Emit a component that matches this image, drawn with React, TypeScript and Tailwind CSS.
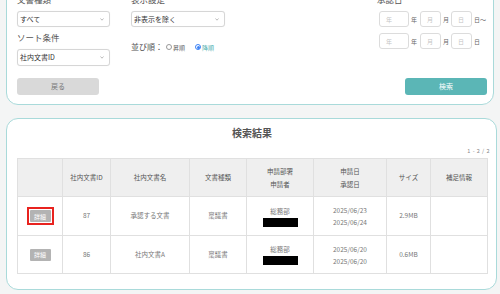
import React from "react";

const font = { fontFamily: '"Noto Sans CJK JP", "Noto Sans", sans-serif' };

const Chevron = () => (
  <svg width="4" height="3" viewBox="0 0 4 3" className="mr-[5px]">
    <path d="M0.5 0.5 L2 2.2 L3.5 0.5" fill="none" stroke="#aaa" strokeWidth="0.8" />
  </svg>
);

const Select = ({ value, h = "h-[16px]" }: { value: string; h?: string }) => (
  <div
    className={`${h} w-full flex items-center justify-between rounded-[3px] border border-[#d6d6d6] bg-white pl-[2px] text-[7px] text-[#333] shadow-[0_0_1px_rgba(0,0,0,0.08)]`}
  >
    <span>{value}</span>
    <Chevron />
  </div>
);

const Label = ({ children }: { children: React.ReactNode }) => (
  <div className="h-[12px] leading-[12px] text-[8.5px] text-[#555]">{children}</div>
);

const DateBox = ({ ph, w }: { ph: string; w: string }) => (
  <div
    className={`${w} h-[16px] flex items-center rounded-[3px] border border-[#dcdcdc] bg-white pl-[6px] text-[6px] text-[#c4c4c4]`}
  >
    {ph}
  </div>
);

const DateRow = ({ last }: { last: string }) => (
  <div className="flex items-center text-[6px] text-[#666]">
    <DateBox ph="年" w="w-[30px]" />
    <span className="w-[11px] pl-[2px]">年</span>
    <DateBox ph="月" w="w-[21px]" />
    <span className="w-[10px] pl-[2px]">月</span>
    <DateBox ph="日" w="w-[21px]" />
    <span className="pl-[2px]">{last}</span>
  </div>
);

const DetailBtn = ({ active }: { active?: boolean }) => (
  <div
    className={`mx-auto flex w-fit items-center justify-center ${
      active ? "border-2 border-[#e8231f] p-[1px]" : "border-2 border-transparent p-[1px]"
    }`}
  >
    <div className="flex h-[12px] w-[21px] items-center justify-center rounded-[1px] bg-[#b3b3b3] text-[6px] text-white">
      詳細
    </div>
  </div>
);

const rows = [
  { id: "87", name: "承認する文書", type: "稟議書", dept: "総務部", d1: "2025/06/23", d2: "2025/06/24", size: "2.9MB", active: true, h: "h-[39px]" },
  { id: "86", name: "社内文書A", type: "稟議書", dept: "総務部", d1: "2025/06/20", d2: "2025/06/20", size: "0.6MB", active: false, h: "h-[38px]" },
];

export default function App() {
  return (
    <div className="h-[294px] w-[500px] overflow-hidden bg-[#f4f5f5]" style={font}>
      {/* search form */}
      <div className="-mt-[20px] ml-[6px] mr-[6px] rounded-b-[12px] border border-[#a9dada] bg-white pb-[9px] pl-[10px] pr-[6px] pt-[12px]">
        <div className="flex">
          <div className="w-[93px]">
            <Label>文書種類</Label>
            <div className="mt-[6px]">
              <Select value="すべて" />
            </div>
            <div className="mt-[4px]">
              <Label>ソート条件</Label>
            </div>
            <div className="mt-[6px]">
              <Select value="社内文書ID" h="h-[17px]" />
            </div>
          </div>
          <div className="ml-[21px] w-[94px]">
            <Label>表示設定</Label>
            <div className="mt-[6px]">
              <Select value="非表示を除く" />
            </div>
            <div className="mt-[14px] flex h-[12px] items-center">
              <span className="text-[8px] text-[#555]">並び順：</span>
              <span className="ml-[3px] h-[6px] w-[6px] rounded-full border border-[#999] bg-white" />
              <span className="ml-[1px] text-[6px] text-[#666]">昇順</span>
              <span className="ml-[10px] flex h-[6px] w-[6px] items-center justify-center rounded-full border border-[#3b82f6] bg-white">
                <span className="h-[3px] w-[3px] rounded-full bg-[#3b82f6]" />
              </span>
              <span className="ml-[1px] text-[6px] text-[#4fb0b0]">降順</span>
            </div>
          </div>
          <div className="ml-[152px]">
            <Label>承認日</Label>
            <div className="mt-[6px] pl-[2px]">
              <DateRow last="日〜" />
            </div>
            <div className="mt-[6px] pl-[2px]">
              <DateRow last="日" />
            </div>
          </div>
        </div>
        <div className="mt-[12px] flex justify-between">
          <button className="flex h-[17px] w-[82px] items-center justify-center rounded-[3px] bg-[#d9d9d9] text-[7px] text-[#777]">
            戻る
          </button>
          <button className="flex h-[17px] w-[82px] items-center justify-center rounded-[3px] bg-[#5bb6b6] text-[7px] text-white">
            検索
          </button>
        </div>
      </div>

      {/* results */}
      <div className="ml-[6px] mr-[3px] mt-[13px] rounded-[12px] border border-[#a9dada] bg-white pb-[15px] pl-[10px] pr-[9px] pt-[7px]">
        <div className="h-[14px] text-center text-[10px] font-bold leading-[14px] text-[#555]">検索結果</div>
        <div className="-mr-[3px] mt-[7px] h-[8px] text-right text-[5.5px] leading-[8px] tracking-[0.5px] text-[#888]">
          1 - 2 / 2
        </div>
        <table className="mt-[3px] w-[470px] table-fixed border-collapse text-[6.5px]">
          <colgroup>
            <col className="w-[45px]" />
            <col className="w-[48px]" />
            <col className="w-[79px]" />
            <col className="w-[57px]" />
            <col className="w-[67px]" />
            <col className="w-[73px]" />
            <col className="w-[44px]" />
            <col className="w-[57px]" />
          </colgroup>
          <thead>
            <tr className="h-[38px] bg-[#efefef] text-[#555]">
              <th className="border border-[#e0e0e0] font-normal"></th>
              <th className="border border-[#e0e0e0] font-normal">社内文書ID</th>
              <th className="border border-[#e0e0e0] font-normal">社内文書名</th>
              <th className="border border-[#e0e0e0] font-normal">文書種類</th>
              <th className="border border-[#e0e0e0] font-normal leading-[13px]">
                申請部署
                <br />
                申請者
              </th>
              <th className="border border-[#e0e0e0] font-normal leading-[13px]">
                申請日
                <br />
                承認日
              </th>
              <th className="border border-[#e0e0e0] font-normal">サイズ</th>
              <th className="border border-[#e0e0e0] font-normal">補足情報</th>
            </tr>
          </thead>
          <tbody className="text-[#777]">
            {rows.map((r) => (
              <tr key={r.id} className={r.h}>
                <td className="border border-[#e0e0e0]">
                  <DetailBtn active={r.active} />
                </td>
                <td className="border border-[#e0e0e0] text-center">{r.id}</td>
                <td className="border border-[#e0e0e0] text-center">{r.name}</td>
                <td className="border border-[#e0e0e0] text-center">{r.type}</td>
                <td className="border border-[#e0e0e0] text-center">
                  <div className="leading-[10px]">{r.dept}</div>
                  <div className="mx-auto mt-[2px] h-[9px] w-[35px] bg-black" />
                </td>
                <td className="border border-[#e0e0e0] text-center leading-[12px]">
                  {r.d1}
                  <br />
                  {r.d2}
                </td>
                <td className="border border-[#e0e0e0] text-center">{r.size}</td>
                <td className="border border-[#e0e0e0]"></td>
              </tr>
            ))}
          </tbody>
        </table>
      </div>
    </div>
  );
}
